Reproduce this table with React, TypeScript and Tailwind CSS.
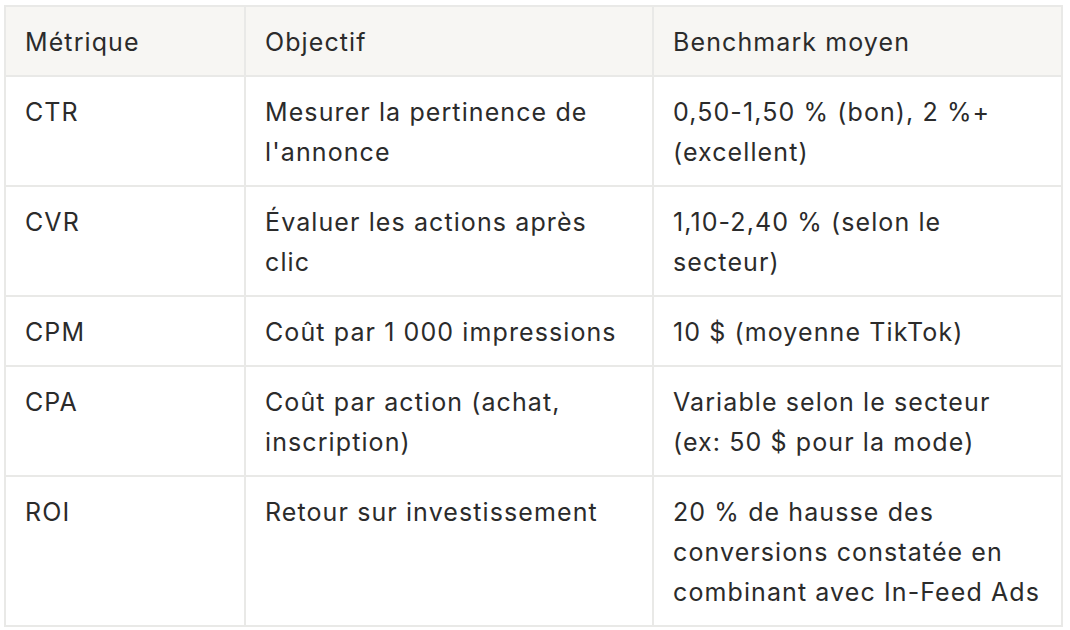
import React from "react";

const rows: [string, string, string][] = [
  ["CTR", "Mesurer la pertinence de l'annonce", "0,50-1,50 % (bon), 2 %+ (excellent)"],
  ["CVR", "Évaluer les actions après clic", "1,10-2,40 % (selon le secteur)"],
  ["CPM", "Coût par 1 000 impressions", "10 $ (moyenne TikTok)"],
  ["CPA", "Coût par action (achat, inscription)", "Variable selon le secteur (ex: 50 $ pour la mode)"],
  ["ROI", "Retour sur investissement", "20 % de hausse des conversions constatée en combinant avec In-Feed Ads"],
];

export default function App() {
  return (
    <div className="w-[1070px] h-[630px] bg-white pl-[4px] pt-[5px]" style={{ fontFamily: "Inter, 'Noto Sans', sans-serif" }}>
      <table className="border-collapse table-fixed w-[1057px] text-[25px] leading-[40px] tracking-[1.1px] text-[#2b2b2b]">
        <colgroup>
          <col className="w-[240px]" />
          <col className="w-[408px]" />
          <col className="w-[409px]" />
        </colgroup>
        <thead>
          <tr className="bg-[#f7f6f3]">
            {["Métrique", "Objectif", "Benchmark moyen"].map((h) => (
              <th key={h} className="border-2 border-[#e9e9e7] pl-[19px] pr-[16px] pt-[15px] pb-[13px] text-left font-normal align-top">
                {h}
              </th>
            ))}
          </tr>
        </thead>
        <tbody>
          {rows.map((r) => (
            <tr key={r[0]}>
              {r.map((c, i) => (
                <td key={i} className="border-2 border-[#e9e9e7] pl-[19px] pr-[16px] pt-[15px] pb-[13px] align-top">
                  {c}
                </td>
              ))}
            </tr>
          ))}
        </tbody>
      </table>
    </div>
  );
}
